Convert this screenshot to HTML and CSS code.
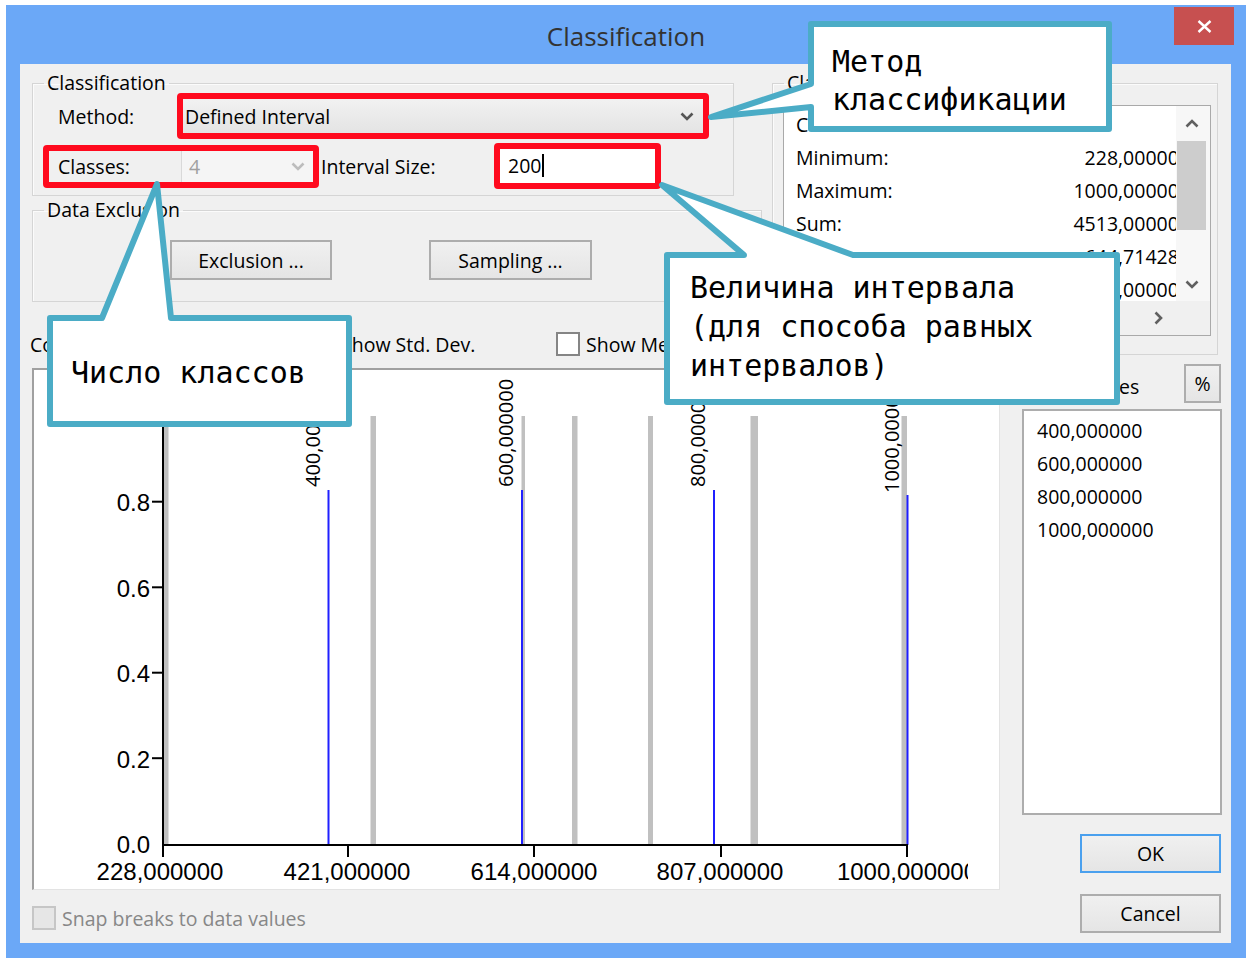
FILE: index.html
```html
<!DOCTYPE html>
<html lang="ru">
<head>
<meta charset="utf-8">
<title>Classification</title>
<link rel="stylesheet" href="styles.css">
</head>
<body>
<div class="window">
  <div class="titlebar">
    <div></div>
    <div class="title">Classification</div>
    <button class="close" aria-label="Close"><svg width="15" height="13" viewBox="0 0 15 13"><path d="M1.5 1 L13.5 12 M13.5 1 L1.5 12" stroke="#fff" stroke-width="2.4" fill="none"/></svg></button>
  </div>
  <div class="frame">
    <div class="client">
      <div class="top-row">
        <div class="left-col">
          <fieldset class="group group-class">
            <legend>Classification</legend>
            <div class="form-row row-method">
              <span class="lbl lbl-method">Method:</span>
              <div class="dropdown"><span>Defined Interval</span><svg width="14" height="9" viewBox="0 0 14 9"><polyline points="1.5,1.5 7,7 12.5,1.5" fill="none" stroke="#555" stroke-width="2.6"/></svg></div>
            </div>
            <div class="form-row row-classes">
              <span class="lbl lbl-classes">Classes:</span>
              <div class="combo-disabled"><span>4</span><svg width="14" height="9" viewBox="0 0 14 9"><polyline points="1.5,1.5 7,7 12.5,1.5" fill="none" stroke="#bdbdbd" stroke-width="2.6"/></svg></div>
              <span class="lbl lbl-interval">Interval Size:</span>
              <div class="text-input"><span>200</span><i class="caret"></i></div>
            </div>
          </fieldset>
          <fieldset class="group group-excl">
            <legend>Data Exclusion</legend>
            <div class="btn-row">
              <button class="btn btn-excl">Exclusion ...</button>
              <button class="btn btn-samp">Sampling ...</button>
            </div>
          </fieldset>
          <div class="options-row">
            <div class="opt-columns"><span>Columns:</span><div class="spin"></div></div>
            <label class="check opt-std"><span class="box"></span>Show Std. Dev.</label>
            <label class="check opt-mean"><span class="box"></span>Show Mean</label>
          </div>
        </div>
        <fieldset class="group group-stats">
          <legend>Classification Statistics</legend>
          <div class="stats-panel">
            <div class="stats-view">
              <div class="stats-inner">
                <div class="stat"><span>Count:</span><span>7</span></div>
                <div class="stat"><span>Minimum:</span><span>228,000000</span></div>
                <div class="stat"><span>Maximum:</span><span>1000,000000</span></div>
                <div class="stat"><span>Sum:</span><span>4513,000000</span></div>
                <div class="stat"><span>Mean:</span><span>644,714286</span></div>
                <div class="stat"><span>Median:</span><span>655,000000</span></div>
              </div>
            </div>
            <div class="vscroll">
              <span class="arr up"><svg width="14" height="9" viewBox="0 0 14 9"><polyline points="1.5,7.5 7,2 12.5,7.5" fill="none" stroke="#606060" stroke-width="2.6"/></svg></span>
              <span class="thumb"></span>
              <span class="track"></span>
              <span class="arr down"><svg width="14" height="9" viewBox="0 0 14 9"><polyline points="1.5,1.5 7,7 12.5,1.5" fill="none" stroke="#606060" stroke-width="2.6"/></svg></span>
            </div>
            <div class="hscroll">
              <span class="arr left"><svg width="9" height="14" viewBox="0 0 9 14"><polyline points="7.5,1.5 2,7 7.5,12.5" fill="none" stroke="#606060" stroke-width="2.6"/></svg></span>
              <span class="htrack"></span>
              <span class="arr right"><svg width="9" height="14" viewBox="0 0 9 14"><polyline points="1.5,1.5 7,7 1.5,12.5" fill="none" stroke="#606060" stroke-width="2.6"/></svg></span>
            </div>
            <div class="corner"></div>
          </div>
        </fieldset>
      </div>
      <div class="bottom-row">
        <div class="chart-col">
          <div class="chart">
            <svg class="plot" width="965" height="519" viewBox="34 370 965 519">
              <defs><clipPath id="xclip"><rect x="34" y="370" width="934" height="519"/></clipPath></defs>
              <g fill="#c0c0c0">
                <rect x="163" y="416" width="5.5" height="429"/>
                <rect x="370.5" y="416" width="5.5" height="429"/>
                <rect x="521.5" y="416" width="3.5" height="429"/>
                <rect x="572" y="416" width="5.5" height="429"/>
                <rect x="648" y="416" width="5" height="429"/>
                <rect x="750.5" y="416" width="7.5" height="429"/>
                <rect x="901.5" y="416" width="5.5" height="429"/>
              </g>
              <g stroke="#2020ff" stroke-width="2">
                <line x1="328.5" y1="490" x2="328.5" y2="845"/>
                <line x1="522" y1="490" x2="522" y2="845"/>
                <line x1="714" y1="490" x2="714" y2="845"/>
                <line x1="907.5" y1="495" x2="907.5" y2="845"/>
              </g>
              <g stroke="#000" stroke-width="2">
                <line x1="163" y1="415" x2="163" y2="857"/>
                <line x1="162" y1="845" x2="908" y2="845"/>
                <line x1="152" y1="416.2" x2="163" y2="416.2"/>
                <line x1="152" y1="501.7" x2="163" y2="501.7"/>
                <line x1="152" y1="587.3" x2="163" y2="587.3"/>
                <line x1="152" y1="672.7" x2="163" y2="672.7"/>
                <line x1="152" y1="758.2" x2="163" y2="758.2"/>
                <line x1="348" y1="845" x2="348" y2="857"/>
                <line x1="534" y1="845" x2="534" y2="857"/>
                <line x1="721" y1="845" x2="721" y2="857"/>
                <line x1="907" y1="845" x2="907" y2="857"/>
              </g>
              <g class="axis-txt" text-anchor="end">
                <text x="150" y="425.5">1.0</text>
                <text x="150" y="511">0.8</text>
                <text x="150" y="596.5">0.6</text>
                <text x="150" y="682">0.4</text>
                <text x="150" y="767.5">0.2</text>
                <text x="150" y="853">0.0</text>
              </g>
              <g class="axis-txt" text-anchor="middle" clip-path="url(#xclip)">
                <text x="160" y="880">228,000000</text>
                <text x="347" y="880">421,000000</text>
                <text x="534" y="880">614,000000</text>
                <text x="720" y="880">807,000000</text>
                <text x="907" y="880">1000,000000</text>
              </g>
              <g class="brk-txt">
                <text transform="translate(320,487) rotate(-90)">400,000000</text>
                <text transform="translate(513,487) rotate(-90)">600,000000</text>
                <text transform="translate(705,487) rotate(-90)">800,000000</text>
                <text transform="translate(899,493) rotate(-90)">1000,000000</text>
              </g>
            </svg>
          </div>
          <label class="check snap"><span class="box"></span>Snap breaks to data values</label>
        </div>
        <div class="side-col">
          <div class="break-head"><span class="break-lbl">Break Values</span><button class="btn pct">%</button></div>
          <div class="break-list">
            <div>400,000000</div>
            <div>600,000000</div>
            <div>800,000000</div>
            <div>1000,000000</div>
          </div>
          <button class="btn btn-ok">OK</button>
          <button class="btn btn-cancel">Cancel</button>
        </div>
      </div>
    </div>
  </div>
</div>

<div class="hl hl-method"></div>
<div class="hl hl-classes"></div>
<div class="hl hl-interval"></div>

<svg class="callouts" width="1252" height="968" viewBox="0 0 1252 968">
  <g fill="#fff" stroke="#4bacc6" stroke-width="6" stroke-linejoin="round">
    <path d="M811 24 H1109 V129 H811 V107 L711 117 L811 84 Z"/>
    <path d="M667 255 H744 L662 185 L853 255 H1117 V402 H667 Z"/>
    <path d="M50 318 H102 L157 184 L171 318 H349 V424 H50 Z"/>
  </g>
</svg>
<div class="ct ct-method">Метод<br>классификации</div>
<div class="ct ct-interval">Величина интервала<br>(для способа равных<br>интервалов)</div>
<div class="ct ct-classes">Число классов</div>
</body>
</html>
```

FILE: styles.css
```css
* { box-sizing: border-box; }

body {
  margin: 0;
  padding: 5px 0 0 6px;
  width: 1252px;
  height: 968px;
  position: relative;
  overflow: hidden;
  background: #fff;
  font-family: "Open Sans", "Noto Sans", sans-serif;
  font-size: 19.5px;
  color: #000;
}

button { font: inherit; color: inherit; padding: 0; margin: 0; }

.window {
  width: 1240px;
  height: 953px;
  background: #6ba8f7;
  display: flex;
  flex-direction: column;
}

.titlebar {
  height: 59px;
  display: grid;
  grid-template-columns: 1fr auto 1fr;
  align-items: start;
}
.title {
  font-size: 26px;
  line-height: 36px;
  padding-top: 13px;
  color: #333;
}
.close {
  justify-self: end;
  margin: 2px 12px 0 0;
  width: 60px;
  height: 38px;
  border: 0;
  background: #c75050;
  display: flex;
  align-items: center;
  justify-content: center;
}

.frame { flex: 1; padding: 0 15px 15px 14px; }
.client { width: 1211px; height: 879px; background: #f0f0f0; }

.top-row { display: flex; align-items: flex-start; padding-top: 6px; }
.left-col { margin-left: 12px; width: 730px; display: flex; flex-direction: column; }

.group {
  margin: 0;
  padding: 0;
  min-width: 0;
  border: 1px solid #d5d5d5;
  box-shadow: inset 1px 1px 0 #fbfbfb;
}
.group legend { margin-left: 11px; padding: 0 3px; line-height: 26px; }

.group-class { width: 702px; padding-bottom: 10px; }
.form-row { display: flex; align-items: center; height: 38px; padding-left: 25px; }
.row-method { margin-top: 1px; }
.row-classes { margin-top: 12px; }
.lbl-method, .lbl-classes { width: 123px; }

.dropdown {
  width: 524px;
  height: 38px;
  border: 1px solid #acacac;
  background: linear-gradient(#f2f2f2, #e3e3e3);
  display: flex;
  align-items: center;
  justify-content: space-between;
  padding: 0 10px 0 3px;
}
.combo-disabled {
  width: 134px;
  height: 34px;
  border: 1px solid #d9d9d9;
  background: #f5f5f5;
  color: #a0a0a0;
  display: flex;
  align-items: center;
  justify-content: space-between;
  padding: 0 9px 0 7px;
}
.lbl-interval { margin-left: 6px; width: 178px; }
.text-input {
  width: 158px;
  height: 38px;
  background: #fff;
  border: 1px solid #abadb3;
  border-bottom: 2px solid #569de5;
  display: flex;
  align-items: center;
  padding-left: 8px;
}
.caret { display: block; width: 2px; height: 23px; background: #000; margin-left: 1px; }

.group-excl { width: 730px; margin-top: 1px; padding-bottom: 21px; }
.btn-row { display: flex; gap: 97px; margin-top: 17px; padding-left: 137px; }

.btn {
  height: 40px;
  border: 2px solid #adadad;
  background: linear-gradient(#f0f0f0, #e5e5e5);
  text-align: center;
}
.btn-excl { width: 162px; }
.btn-samp { width: 163px; }

.options-row { display: flex; align-items: center; height: 24px; margin-top: 30px; margin-left: -2px; }
.opt-columns { width: 281px; display: flex; align-items: center; gap: 10px; }
.spin { width: 110px; height: 30px; background: #fff; border: 1px solid #abadb3; }
.opt-std { width: 245px; }

.check { display: flex; align-items: center; gap: 6px; white-space: nowrap; }
.box { width: 24px; height: 24px; border: 2px solid #858585; background: #fff; flex: none; }

.group-stats { margin-left: 10px; width: 446px; padding-bottom: 18px; }
.stats-panel {
  margin: 9px 0 0 10px;
  width: 428px;
  height: 231px;
  border: 1px solid #a9a9a9;
  background: #fff;
  display: grid;
  grid-template-columns: 392px 34px;
  grid-template-rows: 195px 34px;
}
.stats-view { overflow: hidden; }
.stats-inner { width: 406px; padding-top: 2px; }
.stat { display: flex; justify-content: space-between; height: 33px; line-height: 33px; padding-left: 12px; white-space: nowrap; }

.arr { display: flex; align-items: center; justify-content: center; }
.vscroll { display: flex; flex-direction: column; background: #f7f7f7; padding-right: 3px; }
.vscroll .up { height: 35px; }
.vscroll .thumb { height: 89px; background: #cdcdcd; margin: 0 1px; }
.vscroll .track { flex: 1; }
.vscroll .down { height: 34px; }
.hscroll { display: flex; background: #f0f0f0; }
.hscroll .arr { width: 35px; }
.htrack { flex: 1; }
.corner { background: #f0f0f0; }

.bottom-row { display: flex; align-items: flex-start; }
.chart-col { margin-left: 12px; width: 968px; }
.chart {
  margin-top: 12px;
  height: 522px;
  background: #fff;
  border-style: solid;
  border-width: 2px 1px 1px 2px;
  border-color: #a0a0a0 #e3e3e3 #e3e3e3 #a0a0a0;
}
.plot { display: block; }
.axis-txt { font-family: "Liberation Sans", Arial, sans-serif; font-size: 24px; fill: #000; }
.brk-txt { font-family: "Open Sans", "Noto Sans", sans-serif; font-size: 20px; fill: #000; }

.snap { margin-top: 16px; height: 24px; color: #878787; }
.snap .box { border-color: #c6c6c6; background: #e6e6e6; }

.side-col { margin-left: 22px; width: 200px; display: flex; flex-direction: column; align-items: flex-start; }
.break-head { margin-top: 8px; width: 199px; height: 39px; display: flex; justify-content: space-between; align-items: center; }
.break-lbl { padding-top: 6px; }
.pct { width: 37px; height: 39px; }
.break-list {
  margin-top: 6px;
  width: 200px;
  height: 406px;
  background: #fff;
  border: 2px solid #adadad;
  padding: 3px 0 0 13px;
  line-height: 33px;
}
.btn-ok { margin: 19px 0 0 58px; width: 141px; height: 39px; border-color: #4aa0ee; }
.btn-cancel { margin: 21px 0 0 58px; width: 141px; height: 39px; }

/* annotation overlays */
.hl {
  position: absolute;
  border: 6px solid #ff0a1e;
  border-radius: 4px;
}
.hl-method { left: 177px; top: 93px; width: 532px; height: 46px; }
.hl-classes { left: 43px; top: 145px; width: 276px; height: 43px; }
.hl-interval { left: 494px; top: 143px; width: 167px; height: 46px; }

.callouts { position: absolute; left: 0; top: 0; pointer-events: none; }

.ct {
  position: absolute;
  font-family: "DejaVu Sans Mono", monospace;
  font-size: 30px;
  line-height: 39px;
  white-space: nowrap;
  color: #000;
}
.ct-method { left: 832px; top: 43px; line-height: 38px; }
.ct-interval { left: 690px; top: 268px; }
.ct-classes { left: 71px; top: 353px; }
```
